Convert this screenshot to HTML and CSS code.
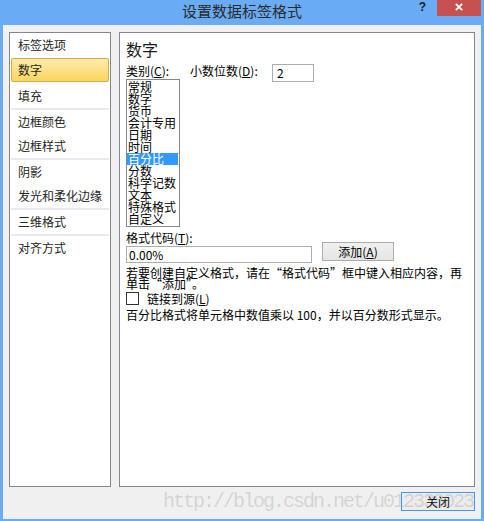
FILE: index.html
```html
<!DOCTYPE html>
<html lang="zh-CN">
<head>
<meta charset="utf-8">
<title>设置数据标签格式</title>
<link rel="stylesheet" href="styles.css">
</head>
<body>
<div class="window">
  <div class="titlebar">
    <div class="spacer"></div>
    <div class="title">设置数据标签格式</div>
    <div class="controls">
      <span class="help">?</span>
      <span class="close"><svg width="8" height="8" viewBox="0 0 8 8"><path d="M0.8 0.8L7.2 7.2M7.2 0.8L0.8 7.2" stroke="#fff" stroke-width="1.8" fill="none"/></svg></span>
    </div>
  </div>
  <div class="client">
    <div class="panels">
      <ul class="nav">
        <li>标签选项</li>
        <li class="sel">数字</li>
        <li>填充</li>
        <li class="sep"></li>
        <li>边框颜色</li>
        <li>边框样式</li>
        <li class="sep"></li>
        <li>阴影</li>
        <li>发光和柔化边缘</li>
        <li class="sep"></li>
        <li>三维格式</li>
        <li class="sep"></li>
        <li>对齐方式</li>
      </ul>
      <section class="content">
        <h2 class="heading">数字</h2>
        <div class="row-top">
          <div class="cat">
            <div class="label">类别(<u>C</u>):</div>
            <div class="listbox">
              <div class="opt">常规</div>
              <div class="opt">数字</div>
              <div class="opt">货币</div>
              <div class="opt">会计专用</div>
              <div class="opt">日期</div>
              <div class="opt">时间</div>
              <div class="opt hl">百分比</div>
              <div class="opt">分数</div>
              <div class="opt">科学记数</div>
              <div class="opt">文本</div>
              <div class="opt">特殊格式</div>
              <div class="opt">自定义</div>
            </div>
          </div>
          <div class="decimals">
            <div class="label dlabel">小数位数(<u>D</u>):</div>
            <div class="field small">2</div>
          </div>
        </div>
        <div class="code-label">格式代码(<u>T</u>):</div>
        <div class="code-row">
          <div class="field code">0.00%</div>
          <div class="add-btn">添加(<u>A</u>)</div>
        </div>
        <p class="hint">若要创建自定义格式，请在“格式代码”框中键入相应内容，再<br>单击“添加”。</p>
        <div class="link">
          <span class="checkbox"></span>
          <span class="link-label">链接到源(<u>L</u>)</span>
        </div>
        <p class="desc">百分比格式将单元格中数值乘以 100，并以百分数形式显示。</p>
      </section>
    </div>
    <div class="footer">
      <div class="btn-close">关闭</div>
    </div>
  </div>
  <div class="watermark">http://blog.csdn.net/u012338023</div>
</div>
</body>
</html>
```

FILE: styles.css
```css
html, body {
  margin: 0;
  padding: 0;
}
body {
  width: 484px;
  height: 521px;
  overflow: hidden;
  background: #69abf5;
  font-family: "Noto Sans CJK SC", "Noto Sans", sans-serif;
}
.window {
  position: relative;
  height: 521px;
  display: flex;
  flex-direction: column;
}
.titlebar {
  height: 25px;
  flex: none;
  display: grid;
  grid-template-columns: 1fr auto 1fr;
  align-items: start;
}
.title {
  font-size: 15px;
  line-height: 21px;
  color: #2b2b2b;
}
.controls {
  justify-self: end;
  display: flex;
  align-items: flex-start;
  margin-right: 3px;
}
.help {
  font: bold 12px/12px "Liberation Sans", sans-serif;
  color: #1d1d1d;
  margin-top: 1px;
  margin-right: 11px;
}
.close {
  width: 44px;
  height: 16px;
  background: #c75050;
  display: flex;
  align-items: center;
  justify-content: center;
  padding-bottom: 2px;
  box-sizing: border-box;
}
.client {
  flex: 1;
  margin: 0 3px 2px;
  background: #f0f0f0;
  padding: 7px 6px 0 6px;
  display: flex;
  flex-direction: column;
}
.panels {
  display: flex;
  gap: 8px;
  height: 455px;
}
.nav {
  width: 102px;
  box-sizing: border-box;
  border: 1px solid #828790;
  background: #fff;
  margin: 0;
  padding: 0;
  list-style: none;
}
.nav li {
  height: 24px;
  line-height: 24px;
  font-size: 12px;
  padding-left: 8px;
  color: #262626;
  white-space: nowrap;
}
.nav li.sel {
  margin: 1px 1px 2px;
  padding-left: 6px;
  border: 1px solid #d6ad4c;
  border-radius: 2px;
  background: linear-gradient(#fdecac, #fbd55f);
  box-sizing: border-box;
  line-height: 22px;
}
.nav li.sep {
  height: 2px;
  padding: 0;
  margin: 0 1px;
  background: #e9e9f1;
}
.content {
  flex: 1;
  box-sizing: border-box;
  border: 1px solid #828790;
  background: #fff;
  padding: 0 6px;
  font-size: 12px;
  color: #000;
}
.heading {
  margin: 6px 0 0;
  font-size: 16px;
  line-height: 20px;
  font-weight: normal;
  color: #1a1a1a;
}
.row-top {
  display: flex;
  margin-top: 5px;
}
.cat {
  display: flex;
  flex-direction: column;
  width: 54px;
}
.label {
  height: 14px;
  line-height: 14px;
  white-space: nowrap;
}
.listbox {
  margin-top: 1px;
  width: 54px;
  height: 148px;
  box-sizing: border-box;
  border: 1px solid #828790;
  padding: 1px 0;
  overflow: hidden;
}
.opt {
  height: 12px;
  line-height: 12px;
  padding-left: 1px;
  margin: 0 1px 0 0;
  white-space: nowrap;
}
.opt.hl {
  background: #3399ff;
  color: #fff;
}
.decimals {
  display: flex;
  align-items: flex-start;
  margin-left: 10px;
}
.dlabel {
  width: 82px;
}
.field {
  box-sizing: border-box;
  border: 1px solid #abadb3;
  background: #fff;
  white-space: nowrap;
}
.field.small {
  width: 42px;
  height: 18px;
  line-height: 16px;
  padding-left: 4px;
}
.code-label {
  margin-top: 5px;
  height: 12px;
  line-height: 12px;
}
.code-row {
  display: flex;
  align-items: flex-start;
  margin-top: -2px;
}
.field.code {
  width: 186px;
  height: 17px;
  margin-top: 4px;
  line-height: 15px;
  padding-left: 2px;
}
.add-btn {
  margin-left: 10px;
  width: 72px;
  height: 19px;
  box-sizing: border-box;
  border: 1px solid #acacac;
  background: linear-gradient(#f0f0f0, #e5e5e5);
  text-align: center;
  line-height: 17px;
}
.hint {
  margin: 4px 0 0;
  line-height: 11px;
  white-space: nowrap;
}
.link {
  display: flex;
  align-items: center;
  margin-top: 3px;
  height: 13px;
}
.checkbox {
  width: 13px;
  height: 13px;
  box-sizing: border-box;
  border: 1px solid #333;
  background: #fff;
}
.link-label {
  margin-left: 8px;
  line-height: 13px;
}
.desc {
  margin: 3px 0 0;
  line-height: 14px;
  white-space: nowrap;
}
.footer {
  display: flex;
  justify-content: flex-end;
  margin-top: 5px;
}
.btn-close {
  width: 74px;
  height: 19px;
  box-sizing: border-box;
  border: 1px solid #3c9af0;
  background: #ececec;
  text-align: center;
  line-height: 17px;
  font-size: 12px;
  color: #000;
}
.watermark {
  position: absolute;
  left: 163px;
  top: 492px;
  font: 20px/20px "Liberation Mono", monospace;
  letter-spacing: -2px;
  color: rgba(140, 140, 140, 0.28);
  white-space: nowrap;
  pointer-events: none;
}
```
